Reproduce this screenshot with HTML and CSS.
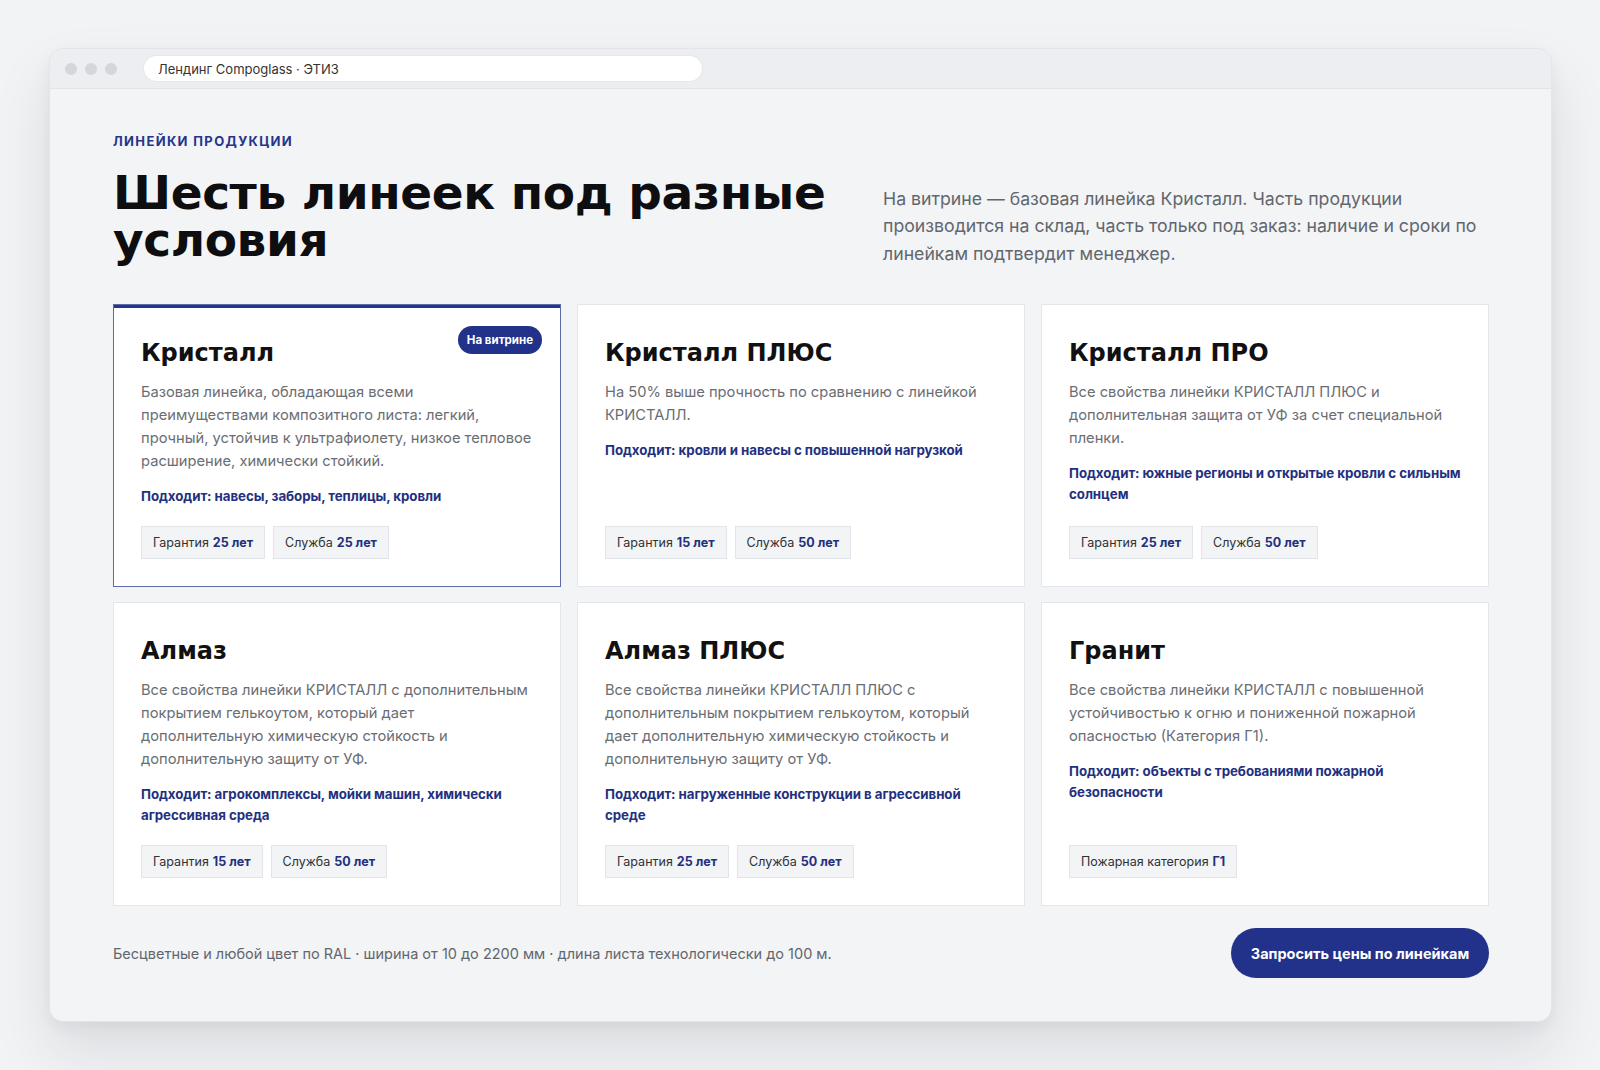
FILE: index.html
```html
<!DOCTYPE html>
<html lang="ru">
<head>
<meta charset="utf-8">
<title>Лендинг Compoglass · ЭТИЗ</title>
<link rel="stylesheet" href="styles.css">
</head>
<body>
<div class="window">
  <div class="titlebar">
    <div class="dots"><span></span><span></span><span></span></div>
    <div class="address">Лендинг Compoglass · ЭТИЗ</div>
  </div>
  <main class="content">
    <div class="eyebrow">ЛИНЕЙКИ ПРОДУКЦИИ</div>
    <div class="intro">
      <h1 class="headline">Шесть линеек под разные условия</h1>
      <p class="lead">На витрине — базовая линейка Кристалл. Часть продукции производится на склад, часть только под заказ: наличие и сроки по линейкам подтвердит менеджер.</p>
    </div>
    <div class="grid">
      <article class="card card-featured">
        <span class="badge">На витрине</span>
        <h2 class="card-title">Кристалл</h2>
        <p class="card-desc">Базовая линейка, обладающая всеми преимуществами композитного листа: легкий, прочный, устойчив к ультрафиолету, низкое тепловое расширение, химически стойкий.</p>
        <p class="card-fit">Подходит: навесы, заборы, теплицы, кровли</p>
        <div class="tags"><span class="tag">Гарантия <b>25 лет</b></span><span class="tag">Служба <b>25 лет</b></span></div>
      </article>
      <article class="card">
        <h2 class="card-title">Кристалл ПЛЮС</h2>
        <p class="card-desc">На 50% выше прочность по сравнению с линейкой КРИСТАЛЛ.</p>
        <p class="card-fit">Подходит: кровли и навесы с повышенной нагрузкой</p>
        <div class="tags"><span class="tag">Гарантия <b>15 лет</b></span><span class="tag">Служба <b>50 лет</b></span></div>
      </article>
      <article class="card">
        <h2 class="card-title">Кристалл ПРО</h2>
        <p class="card-desc">Все свойства линейки КРИСТАЛЛ ПЛЮС и дополнительная защита от УФ за счет специальной пленки.</p>
        <p class="card-fit">Подходит: южные регионы и открытые кровли с сильным солнцем</p>
        <div class="tags"><span class="tag">Гарантия <b>25 лет</b></span><span class="tag">Служба <b>50 лет</b></span></div>
      </article>
      <article class="card">
        <h2 class="card-title">Алмаз</h2>
        <p class="card-desc">Все свойства линейки КРИСТАЛЛ с дополнительным покрытием гелькоутом, который дает дополнительную химическую стойкость и дополнительную защиту от УФ.</p>
        <p class="card-fit">Подходит: агрокомплексы, мойки машин, химически агрессивная среда</p>
        <div class="tags"><span class="tag">Гарантия <b>15 лет</b></span><span class="tag">Служба <b>50 лет</b></span></div>
      </article>
      <article class="card">
        <h2 class="card-title">Алмаз ПЛЮС</h2>
        <p class="card-desc">Все свойства линейки КРИСТАЛЛ ПЛЮС с дополнительным покрытием гелькоутом, который дает дополнительную химическую стойкость и дополнительную защиту от УФ.</p>
        <p class="card-fit">Подходит: нагруженные конструкции в агрессивной среде</p>
        <div class="tags"><span class="tag">Гарантия <b>25 лет</b></span><span class="tag">Служба <b>50 лет</b></span></div>
      </article>
      <article class="card">
        <h2 class="card-title">Гранит</h2>
        <p class="card-desc">Все свойства линейки КРИСТАЛЛ с повышенной устойчивостью к огню и пониженной пожарной опасностью (Категория Г1).</p>
        <p class="card-fit">Подходит: объекты с требованиями пожарной безопасности</p>
        <div class="tags"><span class="tag">Пожарная категория <b>Г1</b></span></div>
      </article>
    </div>
    <div class="footer">
      <p class="note">Бесцветные и любой цвет по RAL · ширина от 10 до 2200 мм · длина листа технологически до 100 м.</p>
      <a class="cta" href="#">Запросить цены по линейкам</a>
    </div>
  </main>
</div>
</body>
</html>
```
FILE: styles.css
```css
* { box-sizing: border-box; }
html, body { margin: 0; padding: 0; }
html { background: #f2f3f5; }
body {
  background: #f2f3f5;
  font-family: Inter, "Noto Sans", "DejaVu Sans", sans-serif;
  color: #1a1a1a;
  padding: 48px 48px 48px 49px;
  min-height: 1070px;
}
.window {
  width: 1503px;
  height: 974px;
  background: #f3f4f6;
  border: 1px solid #e3e5e8;
  border-radius: 14px;
  box-shadow: 0 30px 60px rgba(20, 25, 40, 0.10), 0 6px 16px rgba(20, 25, 40, 0.05);
  overflow: hidden;
}
.titlebar {
  height: 40px;
  background: #eceef1;
  border-bottom: 1px solid #e2e4e8;
  display: flex;
  align-items: center;
  padding: 0 0 0 15px;
}
.dots { display: flex; gap: 8px; }
.dots span {
  width: 12px; height: 12px; border-radius: 50%;
  background: #d4d6da;
}
.address {
  margin-left: 27px;
  width: 558px;
  height: 25px;
  background: #fff;
  border-radius: 13px;
  box-shadow: 0 0 0 1px #e6e8eb;
  display: flex;
  align-items: center;
  padding-left: 14px;
  font-size: 13px;
  color: #333;
}
.content {
  padding: 44px 62px 40px 63px;
}
.eyebrow {
  font-size: 13px;
  line-height: 16px;
  font-weight: 700;
  letter-spacing: 1.35px;
  color: #26358c;
}
.intro {
  display: flex;
  justify-content: space-between;
  align-items: flex-end;
  margin-top: 20px;
}
.headline {
  margin: 0;
  max-width: 760px;
  font-family: "DejaVu Sans", sans-serif;
  font-weight: 700;
  font-size: 47px;
  line-height: 47px;
  letter-spacing: -0.4px;
  color: #0e0e10;
}
.lead {
  margin: 0 0 -4px 0;
  width: 606px;
  font-size: 17.7px;
  line-height: 27.5px;
  color: #62666d;
}
.grid {
  margin-top: 41px;
  display: grid;
  grid-template-columns: repeat(3, 1fr);
  gap: 15px 16px;
}
.card {
  position: relative;
  background: #fff;
  border: 1px solid #e3e6ea;
  padding: 34px 24px 27px 27px;
  display: flex;
  flex-direction: column;
}
.card-featured {
  border-color: #5d6aa8;
  box-shadow: inset 0 3px 0 #25348c;
}
.badge {
  position: absolute;
  top: 21px;
  right: 18px;
  height: 28px;
  padding: 0 9px;
  border-radius: 14px;
  background: #22328a;
  color: #fff;
  font-size: 11.5px;
  font-weight: 700;
  display: flex;
  align-items: center;
}
.card-title {
  margin: 0;
  font-family: "DejaVu Sans", sans-serif;
  font-weight: 700;
  font-size: 24px;
  line-height: 29px;
  letter-spacing: 0;
  color: #111;
}
.card-desc {
  margin: 13px 0 0;
  padding-right: 3px;
  font-size: 14.7px;
  line-height: 23px;
  color: #6a6d73;
}
.card-fit {
  margin: 13px 0 0;
  font-size: 13.3px;
  line-height: 21px;
  font-weight: 700;
  letter-spacing: -0.05px;
  color: #23307f;
}
.tags {
  margin-top: auto;
  padding-top: 19px;
  display: flex;
  gap: 8px;
}
.tag {
  height: 33px;
  display: inline-flex;
  align-items: center;
  padding: 0 11px;
  background: #f2f4f6;
  border: 1px solid #e1e4e8;
  font-size: 12.5px;
  color: #2f3136;
}
.tag b {
  font-weight: 700;
  color: #23307f;
  margin-left: 4px;
}
.footer {
  margin-top: 22px;
  display: flex;
  justify-content: space-between;
  align-items: center;
}
.note {
  margin: 0;
  font-size: 14.5px;
  color: #62666d;
}
.cta {
  height: 50px;
  width: 258px;
  border-radius: 25px;
  background: #22328a;
  color: #fff;
  font-size: 14.5px;
  font-weight: 700;
  text-decoration: none;
  display: flex;
  align-items: center;
  justify-content: center;
}
```
